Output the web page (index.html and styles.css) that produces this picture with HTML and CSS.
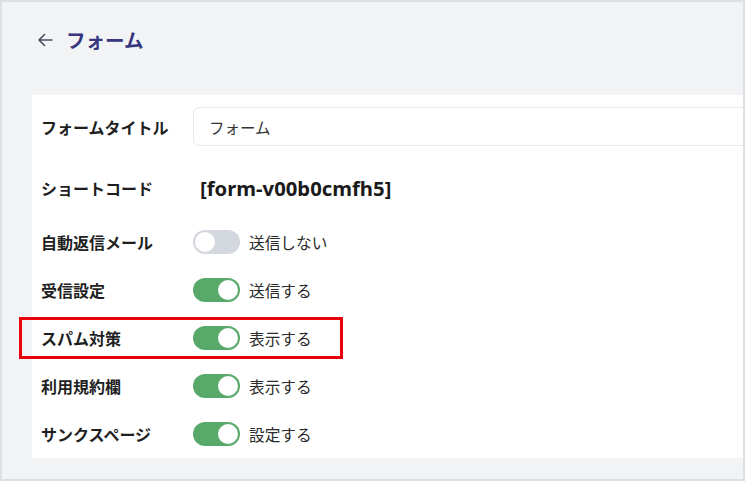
FILE: index.html
```html
<!DOCTYPE html>
<html lang="ja">
<head>
<meta charset="utf-8">
<link rel="stylesheet" href="styles.css">
</head>
<body>
<div class="frame">
  <header class="head">
    <svg class="back" width="16" height="14" viewBox="0 0 16 14"><path d="M15 7H2M7.5 1.5L2 7l5.5 5.5" fill="none" stroke="#4b5060" stroke-width="1.6" stroke-linecap="round" stroke-linejoin="round"/></svg>
    <h1 class="title">フォーム</h1>
  </header>
  <section class="card">
    <div class="row row-input">
      <div class="label">フォームタイトル</div>
      <div class="input">フォーム</div>
    </div>
    <div class="row row-code">
      <div class="label">ショートコード</div>
      <div class="code">[form-v00b0cmfh5]</div>
    </div>
    <div class="row">
      <div class="label">自動返信メール</div>
      <span class="toggle off"><span class="knob"></span></span>
      <span class="val">送信しない</span>
    </div>
    <div class="row">
      <div class="label">受信設定</div>
      <span class="toggle"><span class="knob"></span></span>
      <span class="val">送信する</span>
    </div>
    <div class="row marked">
      <span class="mark"></span>
      <div class="label">スパム対策</div>
      <span class="toggle"><span class="knob"></span></span>
      <span class="val">表示する</span>
    </div>
    <div class="row">
      <div class="label">利用規約欄</div>
      <span class="toggle"><span class="knob"></span></span>
      <span class="val">表示する</span>
    </div>
    <div class="row">
      <div class="label">サンクスページ</div>
      <span class="toggle"><span class="knob"></span></span>
      <span class="val">設定する</span>
    </div>
  </section>
</div>
</body>
</html>
```
FILE: styles.css
```css
* { box-sizing: border-box; }
html, body { margin: 0; padding: 0; }
body {
  font-family: "Noto Sans CJK JP", "Noto Sans", sans-serif;
  background: #fff;
}
.frame {
  width: 745px;
  height: 481px;
  border: 2px solid #dedfe2;
  background: #f2f3f5;
  overflow: hidden;
}
.head {
  display: flex;
  align-items: center;
  height: 75px;
  padding: 0 0 0 35px;
}
.back { margin-right: 13px; }
.title {
  margin: 0;
  font-size: 19.5px;
  font-weight: 700;
  color: #36357f;
}
.card {
  margin-top: 18px;
  margin-left: 30px;
  background: #fff;
  height: 363px;
}
.row {
  position: relative;
  display: flex;
  align-items: center;
  height: 48px;
  padding-left: 9px;
}
.row-input { height: 63px; }
.row-code { height: 60px; }
.label {
  width: 152px;
  flex: none;
  font-size: 16px;
  font-weight: 700;
  color: #1f1f1f;
}
.input {
  flex: none;
  width: 600px;
  height: 39px;
  border: 1px solid #e6e8ec;
  border-radius: 6px;
  padding-left: 15px;
  display: flex;
  align-items: center;
  font-size: 15.5px;
  color: #333;
}
.code {
  font-family: "Noto Sans", "Noto Sans CJK JP", sans-serif;
  font-size: 20.3px;
  font-weight: 700;
  color: #1a1a1a;
  padding-left: 7px;
}
.toggle {
  position: relative;
  flex: none;
  width: 47px;
  height: 24px;
  border-radius: 12px;
  background: #58a96a;
}
.toggle .knob {
  position: absolute;
  top: 2px;
  right: 2px;
  width: 20px;
  height: 20px;
  border-radius: 50%;
  background: #fff;
}
.toggle.off { background: #d3d7de; }
.toggle.off .knob { right: auto; left: 2px; }
.val {
  margin-left: 9px;
  font-size: 15.7px;
  color: #2a2a2a;
}
.mark {
  position: absolute;
  left: -13px;
  top: 3px;
  width: 324px;
  height: 42px;
  border: 3px solid #e8000b;
}
```
